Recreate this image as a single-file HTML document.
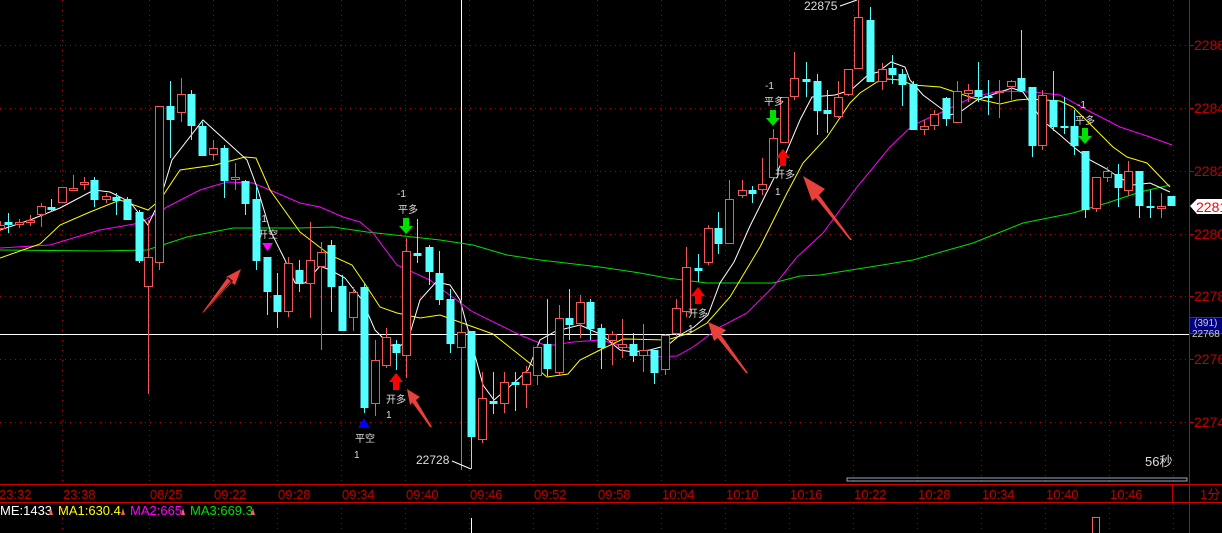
<!DOCTYPE html>
<html><head><meta charset="utf-8"><style>
html,body{margin:0;padding:0;background:#000;width:1222px;height:533px;overflow:hidden}
svg{display:block}
text{font-family:"Liberation Sans","Noto Sans CJK SC",sans-serif}
</style></head><body>
<svg id="s" width="1222" height="533" xmlns="http://www.w3.org/2000/svg">
<rect width="1222" height="533" fill="#000"/>
<g id="grid" stroke="#b00000" stroke-width="1" stroke-dasharray="1,4"></g>
<line x1="0" y1="334.5" x2="1189" y2="334.5" stroke="#fff"/>
<line x1="461.5" y1="0" x2="461.5" y2="470" stroke="#fff"/>
<g id="ma" fill="none" stroke-width="1"></g>
<g id="cd"></g>
<g font-size="11" fill="#ddd">
<text x="804" y="10" font-size="12">22875</text>
<line x1="840" y1="6" x2="857" y2="0" stroke="#fff"/>
<text x="416" y="464" font-size="12">22728</text>
<line x1="452" y1="461" x2="471" y2="469" stroke="#fff"/>
<text x="397" y="197" font-size="10">-1</text><text x="398" y="213" font-size="10">平多</text>
<text x="258" y="222" font-size="10">-1</text><text x="258" y="238" font-size="10">开空</text>
<text x="355" y="442" font-size="10">平空</text><text x="354" y="458" font-size="10">1</text>
<text x="386" y="403" font-size="10">开多</text><text x="386" y="418" font-size="10">1</text>
<text x="688" y="317" font-size="10">开多</text><text x="688" y="332" font-size="10">1</text>
<text x="765" y="89" font-size="10">-1</text><text x="764" y="105" font-size="10">平多</text>
<text x="775" y="178" font-size="10">开多</text><text x="775" y="195" font-size="10">1</text>
<text x="1077" y="108" font-size="10">-1</text><text x="1075" y="124" font-size="10">平多</text>
<text x="1145" y="466" font-size="13">56秒</text>
</g>
<g>
<path d="M403,218h6v8h4l-7,8l-7,-8h4z" fill="#00e000"/>
<path d="M770,110h6v8h4l-7,8l-7,-8h4z" fill="#00e000"/>
<path d="M1082,128h6v8h4l-7,8l-7,-8h4z" fill="#00e000"/>
<path d="M262,243h11l-5.5,8z" fill="#ff00ff"/>
<path d="M358,428h12l-6,-10z" fill="#0000ff"/>
<path d="M393,390h6v-8h4l-7,-9l-7,9h4z" fill="#ff0000"/>
<path d="M695,304h6v-8h4l-7,-9l-7,9h4z" fill="#ff0000"/>
<path d="M780,166h6v-8h4l-7,-9l-7,9h4z" fill="#ff0000"/>
</g>
<g fill="#e8403a">
<path d="M202,313 L231,281 L226,277 L241,269 L235,285 L231,282 Z M202,313 L204,312 L233,281 L228,277 Z"/>
<path d="M432,427 L414,401 L410,405 L407,389 L420,397 L416,400 Z M432,427 L430,427 L412,402 L416,400Z"/>
<path d="M748,373 L720,336 L714,341 L708,322 L726,330 L721,335 Z M748,373 L746,373 L717,337 L721,335Z"/>
<path d="M852,240 L818,196 L812,201 L803,176 L825,189 L819,195 Z M852,240 L850,240 L815,197 L819,195Z"/>
</g>
<line x1="1189.5" y1="0" x2="1189.5" y2="533" stroke="#d00000"/>
<line x1="0" y1="484.5" x2="1222" y2="484.5" stroke="#d00000"/>
<line x1="0" y1="502.5" x2="1222" y2="502.5" stroke="#d00000"/>
<rect x="847" y="478" width="340" height="3" fill="none" stroke="#9ab" stroke-width="1"/>
<g id="ax" font-size="14" fill="#c00000"></g>
<g id="tl" font-size="13" fill="#c00000"></g>
<line x1="1172.5" y1="485" x2="1172.5" y2="502" stroke="#c00000"/>
<text x="1200" y="499" font-size="13" fill="#c00000">1分</text>
<path d="M1190,206 L1197,199 H1222 V214 H1197 Z" fill="#fff"/>
<text x="1196" y="212" font-size="14" fill="#f00">2281</text>
<rect x="1189.5" y="317.5" width="33" height="16" fill="#000080" stroke="#c00"/>
<text x="1194" y="326" font-size="10" fill="#ccc">(391)</text>
<text x="1192" y="337" font-size="10" fill="#ccc">22768</text>
<g font-size="13">
<text x="0" y="515" fill="#fff">ME:1433</text>
<text x="58" y="515" fill="#ffff00">MA1:630.4</text>
<text x="130" y="515" fill="#ff00ff">MA2:665</text>
<text x="190" y="515" fill="#00e000">MA3:669.3</text>
<g fill="#f06060"><path d="M49,515l2,-7l2,7z"/><path d="M121,515l2,-7l2,7z"/><path d="M181,515l2,-7l2,7z"/><path d="M251,515l2,-7l2,7z"/></g>
</g>
<line x1="471.5" y1="518" x2="471.5" y2="533" stroke="#fff"/>
<rect x="1092.5" y="517.5" width="7" height="16" fill="none" stroke="#f06060"/>
</svg>
<script>
var NS="http://www.w3.org/2000/svg";
function el(p,t,a){var e=document.createElementNS(NS,t);for(var k in a)e.setAttribute(k,a[k]);p.appendChild(e);return e;}
var g=document.getElementById('grid');
[45,108,171,234,296,359,422].forEach(function(y){el(g,'line',{x1:0,y1:y+.5,x2:1189,y2:y+.5});});
var vx=[62];for(var k=0;k<17;k++)vx.push(Math.round(149+64.0*k));
vx.forEach(function(x){el(g,'line',{x1:x+.5,y1:0,x2:x+.5,y2:484});el(g,'line',{x1:x+.5,y1:503,x2:x+.5,y2:533});});
var tl=document.getElementById('tl');
var labs=["23:32","23:38","08/25","09:22","09:28","09:34","09:40","09:46","09:52","09:58","10:04","10:10","10:16","10:22","10:28","10:34","10:40","10:46"];
var lx=[-2].concat(vx);
labs.forEach(function(t,i){var x=lx[i];el(tl,'text',{x:x+1,y:499}).textContent=t;});
var ax=document.getElementById('ax');
[[45,"2286"],[108,"2284"],[171,"2282"],[234,"2280"],[296,"2278"],[359,"2276"],[422,"2274"]].forEach(function(a){el(ax,'line',{x1:1189,y1:a[0]+.5,x2:1194,y2:a[0]+.5,stroke:'#c00000'});el(ax,'text',{x:1194,y:a[0]+5}).textContent=a[1];});
var ma=document.getElementById('ma');
function pl(c,pts){el(ma,'polyline',{stroke:c,points:pts});}
pl('#00e000',"0,250 100,251 147,250 187,237 233,228 300,228 333,227 367,232 440,240 473,245 507,255 540,260 600,267 640,273 667,278 707,283 740,283 773,283 800,276 820,275 913,260 973,243 1023,223 1073,213 1107,203 1140,192 1170,185");
pl('#ff00ff',"0,248 50,245 100,230 140,223 167,207 200,190 227,182 253,183 277,193 300,203 320,207 343,217 360,222 373,233 397,265 430,280 440,288 473,312 520,335 547,346 573,342 600,340 627,347 653,357 677,356 693,347 720,327 747,313 773,287 797,257 823,233 857,187 890,147 913,125 940,113 973,97 1000,91 1033,92 1060,95 1087,110 1120,127 1150,137 1172,145");
pl('#ffff00',"0,258 40,244 60,225 90,212 120,200 148,210 160,200 180,170 215,165 245,157 256,158 270,190 300,232 330,255 352,265 365,284 380,307 397,313 420,318 440,315 493,334 517,353 547,377 568,374 580,360 600,350 623,339 667,340 690,333 707,323 730,297 760,247 787,193 803,163 827,137 850,103 860,93 877,82 887,79 900,80 913,85 940,87 973,98 1000,104 1017,100 1030,99 1060,101 1073,107 1093,127 1113,147 1127,157 1147,163 1170,187");
pl('#ffffff',"0,230 30,220 60,208 94,190 110,192 130,202 148,225 160,200 172,160 203,120 225,140 247,160 258,190 270,230 285,260 295,283 305,283 320,266 330,270 345,278 362,300 375,330 390,345 400,346 408,340 420,300 436,282 450,285 460,300 483,385 494,400 515,382 528,370 540,340 556,331 580,325 602,335 620,350 633,352 650,350 668,345 680,335 694,327 708,315 720,283 734,262 750,226 763,200 783,160 800,120 812,97 835,95 851,90 868,75 878,72 891,62 905,67 910,80 923,95 950,115 960,112 977,100 997,93 1012,88 1023,92 1042,120 1060,135 1075,148 1090,160 1105,168 1120,178 1133,185 1150,183 1170,192");
var C=[
[0,225,228,221,231,'r'],[8,222,224,213,233,'c'],[19,222,224,219,228,'r'],[30,220,222,215,226,'r'],[41,206,214,203,227,'r'],[51,207,209,199,212,'c'],
[62,187,202,187,202,'r'],[73,188,190,175,190,'r'],[84,182,184,177,190,'r'],[94,180,199,177,207,'c'],[106,196,199,193,203,'r'],[116,197,200,193,215,'c'],
[127,199,219,197,219,'c'],[139,212,260,210,263,'c'],[148,257,286,220,394,'r'],[159,106,262,106,270,'r'],[170,106,119,81,158,'c'],[181,94,112,78,122,'r'],
[191,94,125,90,140,'c'],[202,126,155,122,155,'c'],[213,148,154,140,160,'r'],[224,148,180,145,198,'c'],[235,177,179,163,190,'r'],[245,181,203,180,215,'c'],
[256,199,260,185,270,'c'],[267,257,291,257,315,'c'],[277,295,311,273,328,'c'],[288,263,311,257,317,'r'],[299,270,283,260,292,'c'],[310,260,283,222,318,'r'],
[321,252,266,242,350,'r'],[331,245,286,240,312,'c'],[342,286,330,275,330,'c'],[353,292,317,287,331,'r'],[364,287,407,283,413,'c'],[375,360,403,340,416,'r'],
[386,337,365,328,368,'r'],[396,344,352,340,370,'c'],[406,251,355,238,378,'r'],[417,253,255,219,263,'c'],[429,247,271,245,285,'c'],[439,273,299,251,305,'c'],
[450,299,343,289,353,'c'],[461,332,347,300,470,'r'],[471,331,436,331,469,'c'],[482,398,439,372,443,'r'],[493,401,403,372,414,'c'],[504,382,403,372,413,'r'],
[515,382,384,372,411,'c'],[526,372,384,366,408,'r'],[537,347,375,344,385,'r'],[547,344,368,299,376,'c'],[559,318,372,305,375,'r'],[569,318,324,289,340,'c'],
[580,302,323,295,338,'r'],[590,302,328,299,340,'c'],[601,328,347,324,369,'c'],[612,334,340,331,365,'r'],[622,344,347,319,358,'r'],[633,344,355,333,362,'c'],
[643,350,355,324,372,'r'],[654,350,372,350,384,'c'],[665,335,369,334,375,'r'],[676,308,333,299,336,'r'],[686,267,311,247,317,'r'],[698,268,270,254,282,'c'],
[708,228,262,225,265,'r'],[718,228,243,212,254,'c'],[729,199,243,180,243,'r'],[742,190,195,180,198,'r'],[752,190,193,186,203,'c'],[762,184,189,158,195,'r'],
[773,138,177,129,177,'r'],[784,97,142,97,142,'r'],[794,78,96,52,100,'r'],[806,79,81,62,97,'c'],[817,81,110,74,135,'c'],[827,110,113,90,133,'c'],
[838,97,116,81,118,'r'],[848,69,94,69,96,'r'],[858,17,68,0,68,'r'],[870,20,81,7,81,'c'],[882,69,81,63,90,'r'],[892,68,74,55,84,'c'],
[902,74,84,69,106,'c'],[913,84,129,81,129,'c'],[924,126,129,120,135,'r'],[934,114,125,110,130,'r'],[946,98,118,97,126,'c'],[957,91,122,81,122,'r'],
[968,90,93,84,102,'r'],[978,90,96,62,102,'c'],[988,96,97,80,115,'c'],[999,91,92,80,118,'r'],[1011,81,86,80,100,'r'],[1021,78,90,30,90,'c'],
[1032,87,145,87,157,'c'],[1042,95,145,90,150,'r'],[1053,100,126,71,131,'c'],[1064,126,127,97,134,'c'],[1074,126,145,110,155,'c'],[1085,151,209,151,218,'c'],
[1096,177,208,177,212,'r'],[1107,171,177,167,182,'r'],[1118,174,187,164,207,'c'],[1128,171,190,161,196,'r'],[1139,171,205,171,218,'c'],[1150,206,207,190,218,'c'],
[1161,206,208,193,218,'r'],[1171,196,205,196,205,'c']];
var cd=document.getElementById('cd');
C.forEach(function(c){var x=c[0],col=c[5]=='r'?'#f25757':'#54ffff';
el(cd,'line',{x1:x+.5,y1:c[3],x2:x+.5,y2:c[4],stroke:col});
var h=Math.max(1,c[2]-c[1]);
if(c[5]=='r'){el(cd,'rect',{x:x-3.5,y:c[1]+.5,width:8,height:h,fill:'#000',stroke:col});}
else el(cd,'rect',{x:x-3.5,y:c[1],width:8,height:h+1,fill:col});});
</script>
</body></html>
